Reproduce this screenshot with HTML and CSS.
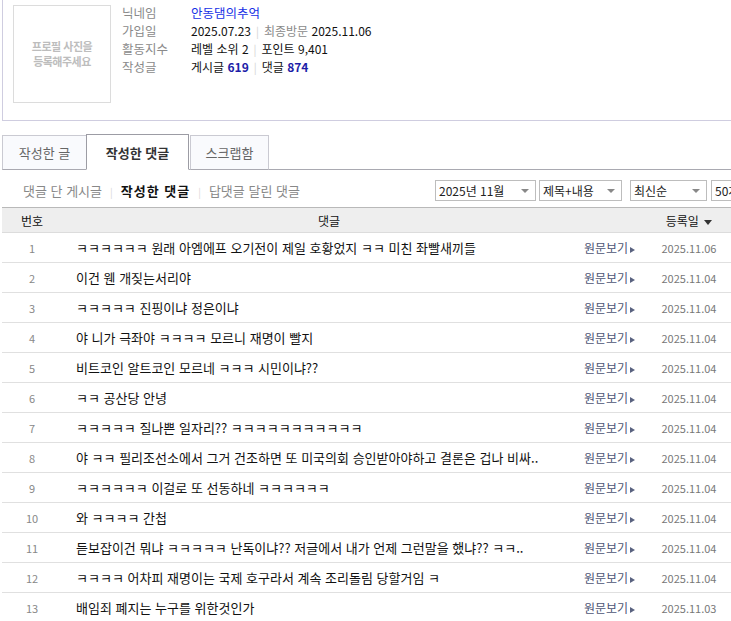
FILE: index.html
```html
<!DOCTYPE html>
<html lang="ko">
<head>
<meta charset="utf-8">
<title>작성한 댓글</title>
<link rel="stylesheet" href="styles.css">
</head>
<body>
<div class="page">
  <div class="profile">
    <div class="photo"><span>프로필 사진을<br>등록해주세요</span></div>
    <dl class="info">
      <div class="info-row"><dt>닉네임</dt><dd><span class="nick">안동댐의추억</span></dd></div>
      <div class="info-row"><dt>가입일</dt><dd>2025.07.23<span class="sep">|</span><span class="muted">최종방문</span> 2025.11.06</dd></div>
      <div class="info-row"><dt>활동지수</dt><dd>레벨 소위 2<span class="sep">|</span>포인트 9,401</dd></div>
      <div class="info-row"><dt>작성글</dt><dd>게시글 <b class="num">619</b><span class="sep">|</span>댓글 <b class="num">874</b></dd></div>
    </dl>
  </div>

  <div class="tabs">
    <div class="tab tab-first">작성한 글</div>
    <div class="tab tab-active">작성한 댓글</div>
    <div class="tab tab-last">스크랩함</div>
  </div>

  <div class="subnav">
    <div class="sublinks">
      <span class="sublink">댓글 단 게시글</span><span class="subsep">|</span><span class="sublink current">작성한 댓글</span><span class="subsep">|</span><span class="sublink">답댓글 달린 댓글</span>
    </div>
    <div class="selects">
      <div class="sel sel-month">2025년 11월<i class="caret"></i></div>
      <div class="sel sel-type">제목+내용<i class="caret"></i></div>
      <div class="sel sel-order">최신순<i class="caret"></i></div>
      <div class="sel sel-count">50개<i class="caret"></i></div>
    </div>
  </div>

  <div class="table">
    <div class="thead">
      <div class="c-num">번호</div>
      <div class="c-head-title">댓글</div>
      <div class="c-date">등록일 <i class="hcaret"></i></div>
    </div>
    <div class="row"><div class="c-num">1</div><div class="c-text">ㅋㅋㅋㅋㅋㅋ 원래 아엠에프 오기전이 제일 호황었지 ㅋㅋ 미친 좌빨새끼들</div><div class="c-link">원문보기<i class="arrow"></i></div><div class="c-date">2025.11.06</div></div>
    <div class="row"><div class="c-num">2</div><div class="c-text">이건 웬 개짖는서리야</div><div class="c-link">원문보기<i class="arrow"></i></div><div class="c-date">2025.11.04</div></div>
    <div class="row"><div class="c-num">3</div><div class="c-text">ㅋㅋㅋㅋㅋ 진핑이냐 정은이냐</div><div class="c-link">원문보기<i class="arrow"></i></div><div class="c-date">2025.11.04</div></div>
    <div class="row"><div class="c-num">4</div><div class="c-text">야 니가 극좌야 ㅋㅋㅋㅋ 모르니 재명이 빨지</div><div class="c-link">원문보기<i class="arrow"></i></div><div class="c-date">2025.11.04</div></div>
    <div class="row"><div class="c-num">5</div><div class="c-text">비트코인 알트코인 모르네 ㅋㅋㅋ 시민이냐??</div><div class="c-link">원문보기<i class="arrow"></i></div><div class="c-date">2025.11.04</div></div>
    <div class="row"><div class="c-num">6</div><div class="c-text">ㅋㅋ 공산당 안녕</div><div class="c-link">원문보기<i class="arrow"></i></div><div class="c-date">2025.11.04</div></div>
    <div class="row"><div class="c-num">7</div><div class="c-text">ㅋㅋㅋㅋㅋ 질나쁜 일자리?? ㅋㅋㅋㅋㅋㅋㅋㅋㅋㅋㅋ</div><div class="c-link">원문보기<i class="arrow"></i></div><div class="c-date">2025.11.04</div></div>
    <div class="row"><div class="c-num">8</div><div class="c-text">야 ㅋㅋ 필리조선소에서 그거 건조하면 또 미국의회 승인받아야하고 결론은 겁나 비싸..</div><div class="c-link">원문보기<i class="arrow"></i></div><div class="c-date">2025.11.04</div></div>
    <div class="row"><div class="c-num">9</div><div class="c-text">ㅋㅋㅋㅋㅋㅋ 이걸로 또 선동하네 ㅋㅋㅋㅋㅋㅋ</div><div class="c-link">원문보기<i class="arrow"></i></div><div class="c-date">2025.11.04</div></div>
    <div class="row"><div class="c-num">10</div><div class="c-text">와 ㅋㅋㅋㅋ 간첩</div><div class="c-link">원문보기<i class="arrow"></i></div><div class="c-date">2025.11.04</div></div>
    <div class="row"><div class="c-num">11</div><div class="c-text">듣보잡이건 뭐냐 ㅋㅋㅋㅋㅋ 난독이냐?? 저글에서 내가 언제 그런말을 했냐?? ㅋㅋ..</div><div class="c-link">원문보기<i class="arrow"></i></div><div class="c-date">2025.11.04</div></div>
    <div class="row"><div class="c-num">12</div><div class="c-text">ㅋㅋㅋㅋ 어차피 재명이는 국제 호구라서 계속 조리돌림 당할거임 ㅋ</div><div class="c-link">원문보기<i class="arrow"></i></div><div class="c-date">2025.11.04</div></div>
    <div class="row"><div class="c-num">13</div><div class="c-text">배임죄 폐지는 누구를 위한것인가</div><div class="c-link">원문보기<i class="arrow"></i></div><div class="c-date">2025.11.03</div></div>
  </div>
</div>
</body>
</html>
```

FILE: styles.css
```css
html, body {
  margin: 0;
  padding: 0;
  overflow: hidden;
  background: #fff;
}
body {
  font-family: "Noto Sans CJK KR", "Noto Sans", sans-serif;
  font-size: 12px;
  color: #222;
}
.page {
  margin-left: 2px;
  width: 759px;
}

/* profile */
.profile {
  display: flex;
  align-items: flex-start;
  height: 115px;
  padding: 5px 0 0 10px;
  border-left: 1px solid #cfcde0;
  border-bottom: 1px solid #cfcde0;
}
.photo {
  width: 96px;
  height: 96px;
  border: 1px solid #dcdcdc;
  display: flex;
  align-items: center;
  justify-content: center;
  text-align: center;
  color: #bdbdbd;
  font-size: 11px;
  font-weight: bold;
  line-height: 15px;
  letter-spacing: -0.5px;
}
.info {
  margin: -1px 0 0 11px;
  padding: 0;
}
.info-row {
  display: flex;
  height: 18px;
  line-height: 18px;
}
.info dt {
  width: 69px;
  color: #8a8a8a;
  font-size: 12.5px;
}
.info dd {
  margin: 0;
  color: #111;
}
.nick { color: #1530e6; font-size: 12.5px; }
.num { color: #1d1da8; }
.muted { color: #8a8a8a; }
.sep {
  color: #d4d4d4;
  margin: 0 5px;
  font-size: 11px;
}

/* tabs */
.tabs {
  display: flex;
  align-items: flex-end;
  margin-top: 13px;
  border-bottom: 1px solid #a9a9b1;
  height: 35px;
}
.tab {
  box-sizing: border-box;
  height: 35px;
  margin-bottom: -1px;
  border: 1px solid #cacad2;
  border-bottom-color: #a9a9b1;
  background: #f9fafd;
  color: #666;
  font-size: 13px;
  display: flex;
  align-items: center;
  justify-content: center;
}
.tab-first { width: 84px; border-right: none; }
.tab-active {
  width: 103px;
  height: 36px;
  border-color: #9c9ca4;
  border-bottom-color: #fff;
  background: #fff;
  color: #333;
  font-weight: bold;
}
.tab-last { width: 79px; margin-left: 1px; }

/* subnav */
.subnav {
  display: flex;
  justify-content: space-between;
  align-items: center;
  margin-top: 10px;
  height: 21px;
  padding: 0 0 0 21px;
}
.sublinks {
  color: #888;
  font-size: 13px;
}
.sublink.current {
  color: #111;
  font-weight: bold;
  letter-spacing: 1px;
}
.subsep {
  color: #d8d8d8;
  margin: 0 8px;
  font-size: 10px;
}
.selects {
  display: flex;
  align-items: center;
}
.sel {
  position: relative;
  box-sizing: border-box;
  height: 21px;
  line-height: 19px;
  border: 1px solid #bdbdbd;
  padding-left: 3px;
  color: #222;
  font-size: 12px;
  background: #fff;
}
.sel-month { width: 101px; }
.sel-type { width: 83px; margin-left: 3px; }
.sel-order { width: 77px; margin-left: 8px; }
.sel-count { width: 50px; margin-left: 4px; }
.caret {
  position: absolute;
  right: 6px;
  top: 8px;
  width: 0;
  height: 0;
  border-left: 4px solid transparent;
  border-right: 4px solid transparent;
  border-top: 4px solid #888;
}

/* table */
.table {
  margin-top: 6px;
  width: 729px;
  border-top: 1px solid #b9b9b9;
}
.thead, .row {
  display: grid;
  grid-template-columns: 60px 1fr 75px 84px;
  align-items: center;
}
.thead {
  height: 24px;
  background: #eeeeee;
  border-bottom: 1px solid #dcdcdc;
  color: #111;
}
.thead .c-head-title {
  grid-column: 2 / 4;
  padding-left: 256px;
}
.hcaret {
  display: inline-block;
  vertical-align: middle;
  margin-left: 2px;
  width: 0;
  height: 0;
  border-left: 4px solid transparent;
  border-right: 4px solid transparent;
  border-top: 5px solid #333;
}
.row {
  height: 29px;
  border-bottom: 1px solid #e0e0e0;
}
.c-num {
  text-align: center;
}
.row .c-num {
  color: #888;
  font-size: 11px;
}
.c-text {
  padding-left: 14px;
  color: #111;
  font-size: 13px;
  white-space: nowrap;
  overflow: hidden;
}
.c-link {
  padding-left: 12px;
  color: #4d5676;
  white-space: nowrap;
}
.arrow {
  display: inline-block;
  vertical-align: middle;
  margin-left: 2px;
  width: 0;
  height: 0;
  border-top: 3px solid transparent;
  border-bottom: 3px solid transparent;
  border-left: 5px solid #5a6380;
}
.c-date {
  text-align: center;
}
.row .c-date {
  color: #777;
  font-size: 11px;
}
```
